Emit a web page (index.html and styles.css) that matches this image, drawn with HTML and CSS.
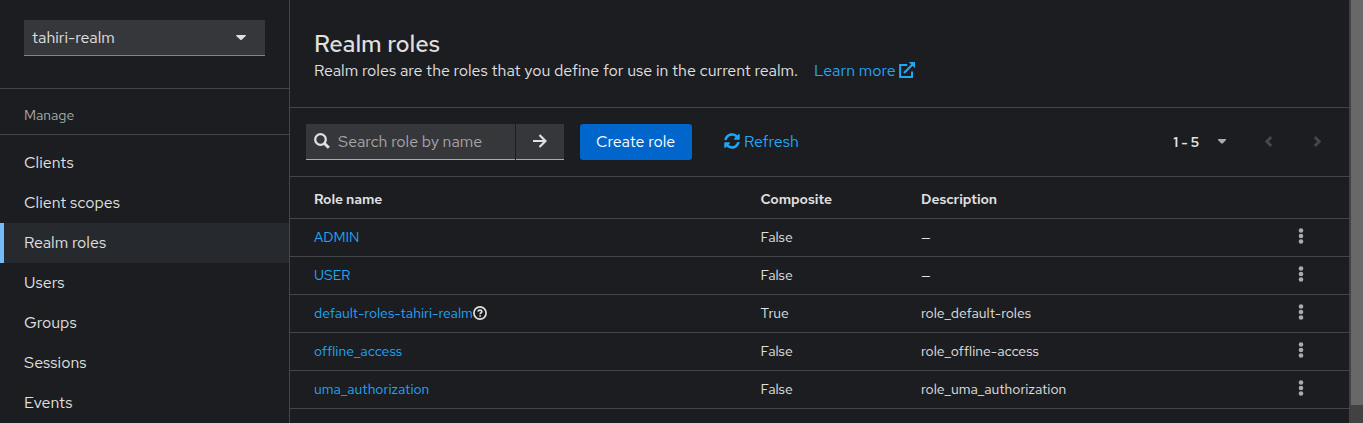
FILE: index.html
```html
<!DOCTYPE html>
<html lang="en">
<head>
<meta charset="utf-8">
<title>Realm roles</title>
<link rel="stylesheet" href="styles.css">
</head>
<body>
<svg class="defs" width="0" height="0">
  <symbol id="kebab" viewBox="0 0 6 18"><circle cx="3" cy="3.5" r="2.3"/><circle cx="3" cy="9" r="2.3"/><circle cx="3" cy="14.5" r="2.3"/></symbol>
</svg>
<div class="app">
  <aside class="sidebar">
    <div class="realm">
      <div class="realm-select"><span>tahiri-realm</span><svg width="10" height="6" viewBox="0 0 10 6"><path d="M.7 0h8.6q.9.2.4 1L5.7 4.8q-.7.6-1.4 0L.3 1Q-.2.2.7 0z"/></svg></div>
    </div>
    <div class="group-title">Manage</div>
    <nav class="nav">
      <a>Clients</a>
      <a>Client scopes</a>
      <a class="current">Realm roles</a>
      <a>Users</a>
      <a>Groups</a>
      <a>Sessions</a>
      <a>Events</a>
    </nav>
  </aside>
  <main class="main">
    <header class="heading">
      <h1>Realm roles</h1>
      <p><span>Realm roles are the roles that you define for use in the current realm.</span><a class="learn"><span>Learn more</span><svg width="16" height="16" viewBox="0 0 16 16"><path class="line" d="M8.2 3H1.1v11.9H13V9.5" stroke-width="2"/><path class="line" d="M5 11 13.5 2.5" stroke-width="2.3"/><path d="M9.7 0H16v6.3z"/></svg></a></p>
    </header>
    <div class="toolbar">
      <div class="search"><svg width="16" height="16" viewBox="0 0 16 16"><circle class="line" cx="6.5" cy="6.5" r="5.3" stroke-width="2.3"/><path class="line" d="m10.5 10.5 4.3 4.3" stroke-width="3"/></svg><span class="placeholder">Search role by name</span></div>
      <div class="go"><svg width="14" height="14" viewBox="0 0 14 14"><path class="line" d="M0 7h12.5M6.5 1l6 6-6 6" stroke-width="2.2"/></svg></div>
      <div class="create">Create role</div>
      <a class="refresh"><svg width="16" height="16" viewBox="0 0 512 512"><path d="M370.72 133.28C339.458 104.008 298.888 87.962 255.848 88c-77.458.068-144.328 53.178-162.791 126.85-1.344 5.363-6.122 9.15-11.651 9.15H24.103c-7.498 0-13.194-6.807-11.807-14.176C33.933 94.924 134.813 8 256 8c66.448 0 126.791 26.136 171.315 68.685L463.03 40.97C478.149 25.851 504 36.559 504 57.941V192c0 13.255-10.745 24-24 24H345.941c-21.382 0-32.09-25.851-16.971-40.971l41.75-41.749zM32 296h134.059c21.382 0 32.09 25.851 16.971 40.971l-41.75 41.75c31.262 29.273 71.835 45.319 114.876 45.28 77.418-.07 144.315-53.144 162.787-126.849 1.344-5.363 6.122-9.15 11.651-9.15h57.304c7.498 0 13.194 6.807 11.807 14.176C478.067 417.076 377.187 504 256 504c-66.448 0-126.791-26.136-171.315-68.685L48.97 471.03C33.851 486.149 8 475.441 8 454.059V320c0-13.255 10.745-24 24-24z"/></svg><span>Refresh</span></a>
      <div class="pager"><b>1 - 5</b><svg class="caret" width="8" height="5" viewBox="0 0 8 5"><path d="M0 0h8v1L4.7 4.5H3.3L0 1z"/></svg><svg class="prev" width="8" height="11" viewBox="0 0 8 11"><path d="M6.2 1 1.8 5.5 6.2 10"/></svg><svg class="next" width="8" height="11" viewBox="0 0 8 11"><path d="M1.8 1 6.2 5.5 1.8 10"/></svg></div>
    </div>
    <div class="table">
      <div class="row head"><b>Role name</b><b>Composite</b><b>Description</b></div>
      <div class="row"><a>ADMIN</a><span>False</span><span>—</span><svg class="kebab"><use href="#kebab"/></svg></div>
      <div class="row"><a>USER</a><span>False</span><span>—</span><svg class="kebab"><use href="#kebab"/></svg></div>
      <div class="row"><a><span>default-roles-tahiri-realm</span><svg class="help" width="14" height="14" viewBox="0 0 14 14"><circle class="line" cx="7" cy="7" r="6.1" stroke-width="1.7"/><path class="line" d="M4.9 5.6Q5.2 4.1 7 4.1T8.9 5.6C8.9 6.9 7.1 6.6 7.1 8.2" stroke-width="1.6"/><path class="line" d="M7.1 9.2v1.6" stroke-width="1.7"/></svg></a><span>True</span><span>role_default-roles</span><svg class="kebab"><use href="#kebab"/></svg></div>
      <div class="row"><a>offline_access</a><span>False</span><span>role_offline-access</span><svg class="kebab"><use href="#kebab"/></svg></div>
      <div class="row"><a>uma_authorization</a><span>False</span><span>role_uma_authorization</span><svg class="kebab"><use href="#kebab"/></svg></div>
    </div>
  </main>
  <div class="scrollbar"><div class="thumb"></div></div>
</div>
</body>
</html>
```
FILE: styles.css
```css
* { box-sizing: border-box; }
body { margin: 0; background: #1b1d21; color: #e0e0e0; font: 16px/24px "Red Hat Text", Inter, "Liberation Sans", sans-serif; overflow: hidden; }
svg { display: block; flex: none; fill: currentColor; }
.line { fill: none; stroke: currentColor; }
b { font-weight: 600; letter-spacing: -.08px; }
.defs { position: absolute; }
.app { display: flex; height: 423px; overflow: hidden; white-space: nowrap; }
.sidebar { width: 290px; flex: none; border-right: 1px solid #444548; }
.realm { height: 89px; padding: 20px 24px 0; border-bottom: 1px solid #444548; }
.realm-select { height: 36px; display: flex; align-items: center; justify-content: space-between; padding: 0 19px 0 8px; background: #36373a; border-bottom: 1px solid #2b9af3; }
.group-title { height: 46px; padding: 14px 24px 0; border-bottom: 1px solid #444548; color: #aaabac; font-size: 14px; }
.nav { padding-top: 8px; }
.nav a { display: flex; align-items: center; height: 40px; padding-left: 24px; }
.nav .current { background: #26292d; border-left: 4px solid #73bcf7; padding-left: 20px; }
.main { flex: 1; }
.heading { height: 108px; padding: 28px 24px 0; border-bottom: 1px solid #444548; }
h1 { margin: 0; font-size: 24px; line-height: 31px; font-weight: 500; letter-spacing: -.06px; }
p { margin: 0; display: flex; }
a { color: #1fa7f8; }
.nav a { color: #e0e0e0; }
.learn { display: flex; margin-left: 16px; gap: 3px; }
.learn svg { margin-top: 3px; }
.toolbar { height: 69px; padding: 16px 0 0 16px; display: flex; border-bottom: 1px solid #444548; }
.search { width: 209px; height: 36px; padding-left: 8px; display: flex; align-items: center; gap: 8px; background: #36373a; border-bottom: 1px solid #aaabac; }
.search svg { margin-top: -1px; }
.placeholder { color: #a5a6a8; }
.go { width: 48px; height: 36px; margin-left: 1px; display: flex; align-items: center; justify-content: center; background: #36373a; border-bottom: 1px solid #aaabac; }
.go svg { margin-top: -1px; }
.create { width: 112px; height: 36px; margin-left: 16px; display: flex; align-items: center; padding-left: 16px; background: #06c; color: #fff; border-radius: 3px; }
.refresh { height: 36px; margin-left: 32px; display: flex; align-items: center; gap: 4px; }
.refresh svg { margin-top: -2px; }
.pager { height: 36px; margin-left: auto; display: flex; align-items: center; font-size: 14px; margin-right: 28px; }
.pager svg { margin-top: -2px; }
.caret { color: #aaabac; margin-left: 19px; }
.prev, .next { fill: none; stroke: #47484b; stroke-width: 2.8; }
.prev { margin-left: 39px; }
.next { margin-left: 40px; }
.row { display: grid; grid-template-columns: 446.5px 160.5px 376.5px 6px; height: 38px; padding-left: 24px; align-items: center; border-bottom: 1px solid #444548; font-size: 14px; line-height: 21px; }
.row.head { height: 42px; padding-top: 4px; }
.row a { display: flex; align-items: center; }
.help { color: #e0e0e0; margin-top: -1px; }
.kebab { width: 6px; height: 18px; margin-top: -3px; color: #aaabac; }
.scrollbar { width: 14px; flex: none; background: #424242; padding-left: 2px; }
.thumb { height: 405px; background: #686868; }
```
